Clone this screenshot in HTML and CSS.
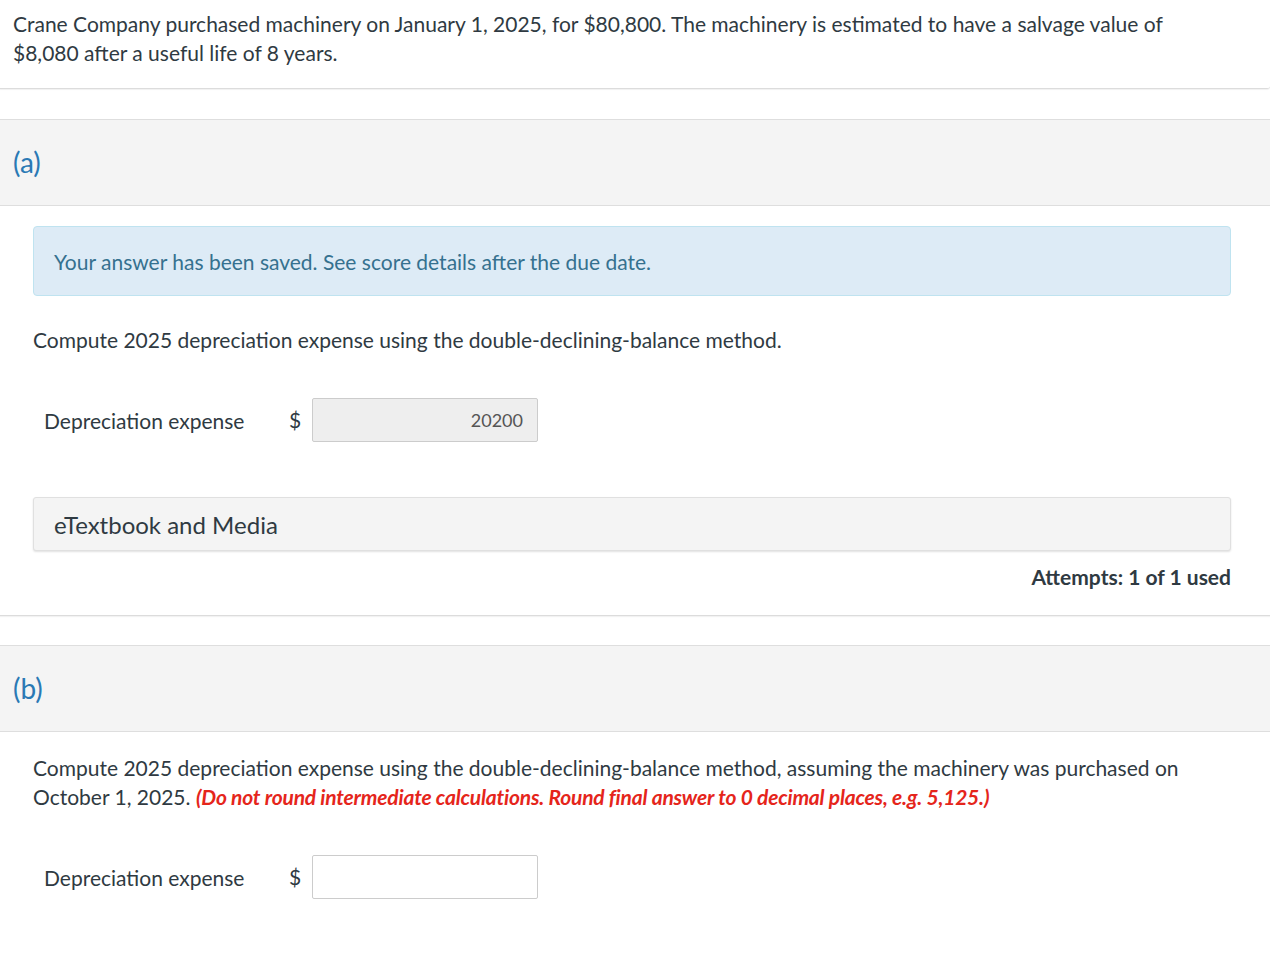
FILE: index.html
```html
<!DOCTYPE html>
<html lang="en">
<head>
<meta charset="utf-8">
<title>Depreciation question</title>
<link rel="stylesheet" href="styles.css">
</head>
<body>
<div class="intro">
  <p>Crane Company purchased machinery on January 1, 2025, for $80,800. The machinery is estimated to have a salvage value of $8,080 after a useful life of 8 years.</p>
</div>

<section class="part">
  <div class="part-head">(a)</div>
  <div class="part-body">
    <div class="alert">Your answer has been saved. See score details after the due date.</div>
    <p class="question">Compute 2025 depreciation expense using the double-declining-balance method.</p>
    <div class="answer-row">
      <span class="answer-label">Depreciation expense</span>
      <span class="currency">$</span>
      <span class="answer-input filled">20200</span>
    </div>
    <div class="media">eTextbook and Media</div>
    <div class="attempts">Attempts: 1 of 1 used</div>
  </div>
</section>

<section class="part part-last">
  <div class="part-head">(b)</div>
  <div class="part-body">
    <p class="question">Compute 2025 depreciation expense using the double-declining-balance method, assuming the machinery was purchased on October 1, 2025. <em class="hint">(Do not round intermediate calculations. Round final answer to 0 decimal places, e.g. 5,125.)</em></p>
    <div class="answer-row">
      <span class="answer-label">Depreciation expense</span>
      <span class="currency">$</span>
      <span class="answer-input"></span>
    </div>
  </div>
</section>
</body>
</html>
```

FILE: styles.css
```css
html, body {
  margin: 0;
  padding: 0;
  background: #ffffff;
}

body {
  font-family: Lato, "Open Sans", "Liberation Sans", sans-serif;
  font-size: 21px;
  line-height: 29px;
  color: #2f3a42;
}

p {
  margin: 0;
}

.intro {
  padding: 9px 90px 21px 13px;
  border-bottom: 1px solid #dcdcdc;
  box-shadow: 0 1px 1px rgba(0, 0, 0, 0.06);
  border-bottom-right-radius: 3px;
}

.part {
  margin-top: 30px;
  border-bottom: 1px solid #dcdcdc;
  box-shadow: 0 1px 1px rgba(0, 0, 0, 0.05);
}

.part-last {
  margin-top: 29px;
  border-bottom: none;
  box-shadow: none;
}

.part-head {
  display: flex;
  align-items: center;
  height: 85px;
  padding-left: 13px;
  background: #f4f4f4;
  border-top: 1px solid #dedede;
  border-bottom: 1px solid #dedede;
  font-size: 28px;
  color: #2a79b4;
}

.part-body {
  padding: 20px 39px 24px 33px;
}

.alert {
  display: flex;
  align-items: center;
  height: 68px;
  padding: 0 20px;
  background: #ddebf6;
  border: 1px solid #bfe3f0;
  border-radius: 4px;
  color: #35718f;
  margin-bottom: 29px;
}

.part-last .part-body {
  padding-top: 21px;
}

.question {
  margin-bottom: 44px;
}

.hint {
  color: #e5251b;
  font-weight: 700;
  font-style: italic;
  letter-spacing: -0.2px;
}

.answer-row {
  display: flex;
  align-items: center;
  padding-left: 11px;
}

.answer-label {
  width: 245px;
}

.currency {
  width: 23px;
  margin-top: -2px;
}

.answer-input {
  box-sizing: border-box;
  width: 226px;
  height: 44px;
  border: 1px solid #cccccc;
  border-radius: 2px;
  background: #ffffff;
  display: flex;
  align-items: center;
  justify-content: flex-end;
  padding-right: 14px;
  font-size: 18px;
  color: #555555;
}

.answer-input.filled {
  background: #eeeeee;
}

.media {
  display: flex;
  align-items: center;
  height: 52px;
  margin-top: 55px;
  padding: 0 20px;
  background: #f4f4f4;
  border: 1px solid #e0e0e0;
  border-radius: 3px;
  box-shadow: 0 1px 2px rgba(0, 0, 0, 0.12);
  font-size: 24px;
}

.attempts {
  margin-top: 11px;
  text-align: right;
  font-weight: 700;
  line-height: 29px;
}
```
